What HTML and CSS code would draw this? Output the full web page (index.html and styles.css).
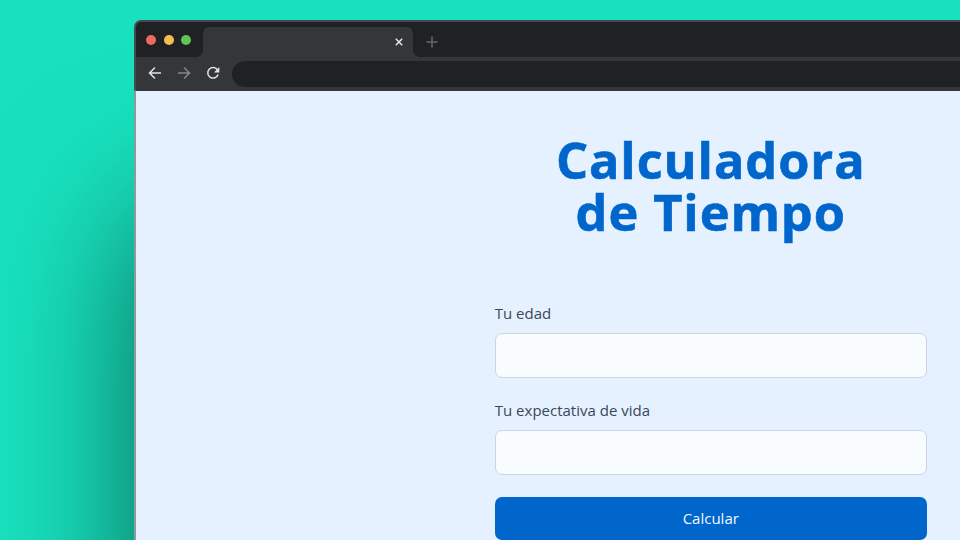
FILE: index.html
```html
<!DOCTYPE html>
<html lang="es">
<head>
<meta charset="utf-8">
<title>Calculadora de Tiempo</title>
<link rel="stylesheet" href="styles.css">
</head>
<body>
<div class="stage">
<div class="window">
  <div class="tabs">
    <div class="lights"><i class="red"></i><i class="yellow"></i><i class="green"></i></div>
    <div class="tab">
      <svg class="close" viewBox="0 0 8 8"><path d="M.8.8l6.4 6.4M7.2.8L.8 7.2"/></svg>
    </div>
    <svg class="plus" viewBox="0 0 12 12"><path d="M6 .5v11M.5 6h11"/></svg>
  </div>
  <div class="toolbar">
    <svg class="nav" viewBox="0 0 14 14"><path d="M13 7H1.7M7 1.5L1.5 7L7 12.5"/></svg>
    <svg class="nav muted" viewBox="0 0 14 14"><path d="M1 7h11.3M7 1.5L12.5 7L7 12.5"/></svg>
    <svg class="nav" viewBox="0 0 14 14"><path d="M11.4 3.7A5.3 5.3 0 1 0 12.1 8.5"/><path class="fill" d="M13.3 1v5.4H7.9z"/></svg>
    <div class="address"></div>
  </div>
  <main>
    <h1>Calculadora<br>de Tiempo</h1>
    <form>
      <label for="age">Tu edad</label>
      <input id="age" type="text">
      <label for="life">Tu expectativa de vida</label>
      <input id="life" type="text">
      <button type="button">Calcular</button>
    </form>
  </main>
</div>
</div>
</body>
</html>
```
FILE: styles.css
```css
* { box-sizing: border-box; }
body {
  margin: 0;
  font-family: "Open Sans", sans-serif;
}
.stage {
  display: flex;
  align-items: flex-start;
  height: 540px;
  padding: 20px 0 0 134px;
  overflow: hidden;
  background: #18e2be;
}
.window {
  flex: none;
  width: 1153px;
  height: 1000px;
  padding: 1.5px 1.5px 0 2px;
  border-radius: 7px 7px 0 0;
  background: linear-gradient(#46494d 70px, #8c9b9e 71px);
  box-shadow: 0 190px 150px -5px rgba(0, 0, 0, .58);
}
.tabs {
  display: flex;
  height: 35.5px;
  background: #202124;
  border-radius: 5px 5px 0 0;
}
.lights {
  display: flex;
  gap: 8px;
  width: 67px;
  padding: 13px 0 0 10px;
}
.lights i { width: 10px; height: 10px; margin-right: -.3px; border-radius: 50%; }
.red { background: #ee6a5f; }
.yellow { background: #f5bd4f; }
.green { background: #61c454; }
.tab {
  position: relative;
  width: 210px;
  height: 30px;
  margin-top: 5.5px;
  border-radius: 6px 6px 0 0;
  background: #35363a;
}
.tab::before, .tab::after {
  content: "";
  position: absolute;
  bottom: 0;
  width: 6px;
  height: 6px;
}
.tab::before { left: -6px; background: radial-gradient(circle at 0 0, transparent 5.5px, #35363a 6px); }
.tab::after { right: -6px; background: radial-gradient(circle at 100% 0, transparent 5.5px, #35363a 6px); }
svg { fill: none; stroke-width: 1.5; }
.close { display: block; width: 8px; height: 8px; margin: 11px 10.5px 0 auto; stroke: #e6e7e9; }
.plus { width: 12px; height: 12px; margin: 14.5px 0 0 13px; stroke: #65676a; }
.toolbar {
  display: flex;
  align-items: center;
  gap: 15px;
  height: 33.5px;
  padding-left: 11.5px;
  background: #35363a;
}
.nav { flex: none; width: 14px; height: 14px; margin-top: -1px; stroke: #e2e3e5; }
.muted { stroke: #85878a; }
.fill { fill: #e2e3e5; stroke: none; }
.address {
  flex: 1;
  height: 26px;
  margin-left: -2.5px;
  border-radius: 13px;
  background: #202124;
}
main { height: 929.5px; padding-top: 43px; background: #e5f1ff; }
h1 {
  margin: 0;
  color: #0066cc;
  font-size: 50.5px;
  font-weight: 700;
  line-height: 52px;
  letter-spacing: .9px;
  text-align: center;
  -webkit-text-stroke: .6px #0066cc;
}
form { display: flex; flex-direction: column; width: 432px; margin: 63.5px auto 0; }
label { height: 31.5px; padding-top: 1.5px; color: #3c4759; font-size: 15px; line-height: 20px; }
input {
  height: 45.5px;
  margin-bottom: 20px;
  border: 1px solid #cbd5e1;
  border-radius: 7px;
  background: #f9fcfe;
}
button {
  height: 43px;
  margin-top: 2px;
  padding-bottom: 2px;
  border: 0;
  border-radius: 7px;
  background: #0066cc;
  color: #f5f9ff;
  font: 500 15px "Open Sans", sans-serif;
}
```
